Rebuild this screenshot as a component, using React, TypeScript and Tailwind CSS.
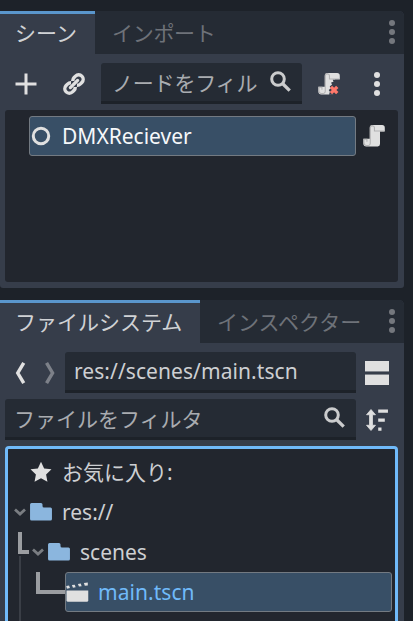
import type { ReactNode } from "react";

type SvgProps = { className?: string; children: ReactNode };

function Icon({ className = "", children }: SvgProps) {
  return (
    <svg viewBox="0 0 16 16" className={`block size-6 shrink-0 ${className}`} fill="#e0e0e0">
      {children}
    </svg>
  );
}

function Dots({ className = "" }: { className?: string }) {
  return (
    <svg viewBox="0 0 6 24" className={`block h-6 w-1.5 shrink-0 ${className}`} fill="currentColor">
      <circle cx="3" cy="3" r="3" />
      <circle cx="3" cy="12" r="3" />
      <circle cx="3" cy="21" r="3" />
    </svg>
  );
}

function Search() {
  return (
    <Icon>
      <g fill="none" stroke="#cbcccd">
        <circle cx="6" cy="6" r="4.2" strokeWidth="2" />
        <path d="M9 9l4.800 4.800" strokeWidth="2.200" />
      </g>
    </Icon>
  );
}

function Script({ broken = false }: { broken?: boolean }) {
  return (
    <Icon>
      <path d="M7 .7a1.800 1.800 0 0 0-1.800 1.800v7.300H.9V13a2 2 0 0 0 2 2H10.500A1.600 1.600 0 0 0 12 13.400V5h3.200V2.500A1.800 1.800 0 0 0 13.400.7z" />
      <path
        d="M5.500 2.500V12.800a1.500 1.500 0 0 1-1.500 1.500H3A1.700 1.700 0 0 1 1.300 12.700V10.200h2v1.600M5.500 2.500a1.500 1.500 0 0 1 1.500-1.400 1.400 1.400 0 0 1 1.300 1.400v2.200h6.500"
        fill="none"
        stroke="#b2b2b3"
        strokeWidth="0.700"
      />
      {broken && (
        <>
          <path d="M12.500 5.100H10.500L11 6.500l-1.600.5.6 1.500-1.500 1 .6 1.500-1.300 1 .8 1.200-.6 1.900h7V5.100z" fill="#363d4a" />
          <path d="M9.300 9.900l4.200 4.200m0-4.200L9.300 14.100" stroke="#ff786b" strokeWidth="2.200" />
        </>
      )}
    </Icon>
  );
}

function Folder() {
  return (
    <Icon className="text-[#8bb6de]">
      <path
        d="M1.700 2a1 1 0 0 0-1 1v9.700a1 1 0 0 0 1 1h12.600a1 1 0 0 0 1-1V6a1 1 0 0 0-1-1H10a1 1 0 0 1-1-1V3a1 1 0 0 0-1-1z"
        fill="currentColor"
      />
    </Icon>
  );
}

function Fold() {
  return (
    <svg viewBox="0 0 12 8" className="block h-2 w-3 shrink-0" fill="none">
      <path d="M1 1.500l5 4.500 5-4.500" stroke="#7a7d82" strokeWidth="2.800" />
    </svg>
  );
}

function Tabs({ active, other, activeClass, otherClass }: { active: string; other: string; activeClass: string; otherClass: string }) {
  return (
    <div className="flex h-[43px] overflow-hidden rounded-tr-[5px] bg-[#252b34]">
      <div className={`flex items-center border-t-[3px] border-[#5a96cc] bg-[#363d4a] pl-[15px] text-[#d0d2d5] ${activeClass}`}>
        <span className="-mt-[3px]">{active}</span>
      </div>
      <div className={`flex flex-1 items-center justify-between pl-[17px] pr-[9px] text-[#6e7279] ${otherClass}`}>
        <span>{other}</span>
        <Dots className="-mt-px text-[#74777d]" />
      </div>
    </div>
  );
}

function Field({ className, children }: { className: string; children: ReactNode }) {
  return (
    <div className={`flex h-[41px] items-center justify-between rounded-t-[3px] border-b-[3px] border-[#1d2229] bg-[#252b34] ${className}`}>
      {children}
    </div>
  );
}

export default function App() {
  return (
    <div className="flex h-[621px] w-[413px] flex-col gap-3 overflow-hidden whitespace-nowrap bg-[#1d2229] pt-[11px] font-['Noto_Sans','Noto_Sans_CJK_JP',sans-serif] text-[21px] leading-[30px] text-[#cdcfd2]">
      <section className="h-[277px] w-[404px] shrink-0 rounded-b-[3px] rounded-tr-[5px] bg-[#363d4a]">
        <Tabs active="シーン" other="インポート" activeClass="w-[95px]" otherClass="tracking-[-0.3px]" />
        <div className="flex h-14 items-center pl-[14px] pt-[3px]">
          <Icon>
            <path d="M7 1v6H1v2h6v6h2V9h6V7H9V1z" />
          </Icon>
          <Icon className="ml-6">
            <g transform="rotate(-45 8 8)" fill="none" stroke="#e0e0e0">
              <path d="M7.200 10A3.100 3.100 0 0 1 4.900 11H3.600a3 3 0 0 1 0-6h1.300A3.100 3.100 0 0 1 7.200 6" strokeWidth="2.300" />
              <path d="M8.800 6A3.100 3.100 0 0 1 11.100 5h1.300a3 3 0 0 1 0 6h-1.300A3.100 3.100 0 0 1 8.800 10" strokeWidth="2.300" />
              <path d="M4.600 8h6.800" strokeWidth="2.200" strokeLinecap="round" />
            </g>
          </Icon>
          <Field className="ml-[15px] w-[201px] pl-[11px] pr-[9px] text-[#a9acb0]">
            <span className="mt-0.5 tracking-[-0.2px]">ノードをフィル</span>
            <Search />
          </Field>
          <div className="ml-[15px]">
            <Script broken />
          </div>
          <Dots className="ml-[33px] text-[#e0e0e0]" />
        </div>
        <div className="ml-[5px] flex h-[172px] w-[393px] items-start rounded-[3px] bg-[#22262e] pl-6 pt-1.5">
          <div className="flex h-10 w-[327px] items-center rounded-[3px] border border-[#737a82] bg-[#384f66] text-[#f6f8fa]">
            <Icon className="-ml-px">
              <circle cx="8" cy="8" r="5.150" fill="none" stroke="#e0e0e0" strokeWidth="2" />
            </Icon>
            <span className="ml-[9px]">DMXReciever</span>
          </div>
          <div className="ml-1.5 flex h-10 items-center">
            <Script />
          </div>
        </div>
      </section>

      <section className="h-[321px] w-[404px] shrink-0 rounded-tr-[5px] bg-[#363d4a]">
        <Tabs active="ファイルシステム" other="インスペクター" activeClass="w-[200px]" otherClass="" />
        <div className="flex h-14 items-center pl-2 pt-[3px]">
          <Icon>
            <path d="M10.500 1.200L6.500 8l4 6.800" fill="none" stroke="#e0e0e0" strokeWidth="2.300" />
          </Icon>
          <Icon className="ml-1.5">
            <path d="M5.700 1.200L9.700 8l-4 6.800" fill="none" stroke="#7d8189" strokeWidth="2.300" />
          </Icon>
          <Field className="ml-[3px] w-[291px] pl-[9px]">
            <span className="-mt-px tracking-[0.07px]">res://scenes/main.tscn</span>
          </Field>
          <Icon className="ml-[9px]">
            <path d="M0 0h16v7.300H0zM0 8.700h16V16H0z" fill="#80848b" />
            <path d="M0 0h16v6.667H0zM0 9.333h16V16H0z" />
          </Icon>
        </div>
        <div className="flex h-[41px] items-center pl-[5px]">
          <Field className="w-[351px] pl-[9px] pr-[9px] text-[#a9acb0]">
            <span className="mt-0.5">ファイルをフィルタ</span>
            <Search />
          </Field>
          <Icon className="ml-[9px]">
            <path d="M4 1l3 3.500H5v7h2L4 15l-3-3.500h2v-7H1z" stroke="#e0e0e0" strokeWidth=".5" strokeLinejoin="round" />
            <path d="M8.800 1h6.500v2.200H8.800zM8.800 7h4.400v2.200H8.800zM8.800 13h2.200v2.200H8.800z" />
          </Icon>
        </div>
        <div className="ml-[5px] mt-1.5 flex h-[175px] w-[393px] flex-col overflow-hidden rounded-t-[4px] border-x-[3px] border-t-[3px] border-[#70bafa] bg-[#22262e] pt-[3px]">
          <div className="flex h-10 shrink-0 items-center pl-[21px]">
            <Icon>
              <path d="M8 1.200l2.100 4.400 4.900.6-3.600 3.500.9 4.800L8 12.200l-4.300 2.300.9-4.800L1 6.200l4.900-.6z" />
            </Icon>
            <span className="ml-[9px]">お気に入り:</span>
          </div>
          <div className="flex h-10 shrink-0 items-center pl-1.5">
            <Fold />
            <div className="ml-[3px]">
              <Folder />
            </div>
            <span className="ml-[9px] -mt-px">res://</span>
          </div>
          <div className="flex h-10 shrink-0 items-center pl-2.5">
            <div className="mb-[18px] h-[22px] w-[11px] border-b-4 border-l-4 border-[#9b9da1]" />
            <div className="ml-[3px]">
              <Fold />
            </div>
            <div className="ml-[3px]">
              <Folder />
            </div>
            <span className="ml-[9px] -mt-px">scenes</span>
          </div>
          <div className="flex h-[49px] shrink-0 items-start pl-[11px]">
            <div className="-mt-4 h-[65px] w-0.5 bg-[#3a3e46]" />
            <div className="ml-[15px] h-[22px] w-[29px] border-b-4 border-l-4 border-[#9b9da1]" />
            <div className="flex h-10 w-[327px] items-center rounded-[3px] border border-[#737a82] bg-[#384f66] text-[#70bafa]">
              <Icon className="-ml-px">
                <path d="M1 7h14.500v6.500a1 1 0 0 1-1 1H2a1 1 0 0 1-1-1z" />
                <path d="M.8 4l1.900-.3.600 1.600-2 .5zM4.600 3.400l1.900-.3.600 1.700-1.800.3zM8.600 2.700l1.900-.3.600 1.700-1.800.3zM12.600 2l2.600-.4v2l-2 .3z" />
              </Icon>
              <span className="-mt-px ml-[9px] tracking-[0.05px]">main.tscn</span>
            </div>
          </div>
        </div>
      </section>
    </div>
  );
}
